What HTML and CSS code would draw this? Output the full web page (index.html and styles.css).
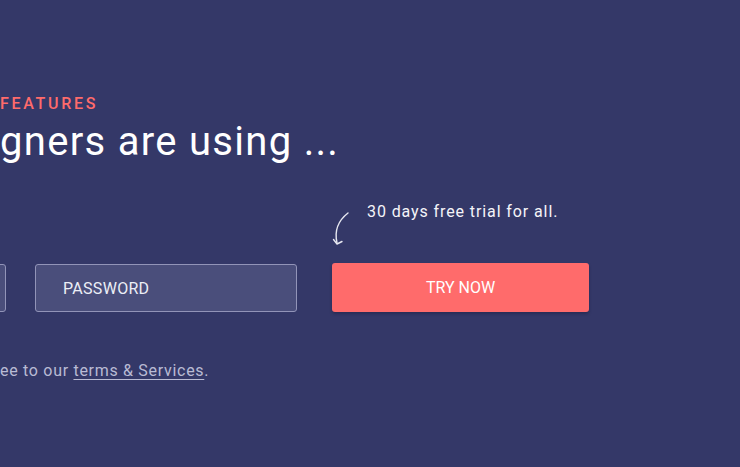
FILE: index.html
```html
<!DOCTYPE html>
<html lang="en">
<head>
<meta charset="utf-8">
<title>Features</title>
<link rel="stylesheet" href="styles.css">
</head>
<body>
<main class="hero">
  <p class="eyebrow"><span class="lead-in">KEY </span>FEATURES</p>
  <h1 class="title"><span class="lead-in">Top desi</span>gners are using ...</h1>
  <div class="note">
    <svg class="note-arrow" width="18" height="36" viewBox="0 0 18 36" aria-hidden="true">
      <path d="M16 3 C 7 10, 2 20, 5 33" fill="none" stroke="#e6e7f0" stroke-width="1.4" stroke-linecap="round"/>
      <path d="M1.5 29.5 L5 34 L10 31.5" fill="none" stroke="#e6e7f0" stroke-width="1.4" stroke-linecap="round" stroke-linejoin="round"/>
    </svg>
    <span class="note-text">30 days free trial for all.</span>
  </div>
  <form class="signup" onsubmit="return false">
    <input class="field" type="email" placeholder="EMAIL">
    <input class="field" type="password" placeholder="PASSWORD">
    <button class="cta" type="submit">TRY NOW</button>
  </form>
  <p class="legal"><span class="lead-in">By signing up you agr</span>ee to our <a href="#">terms &amp; Services</a>.</p>
</main>
</body>
</html>
```
FILE: styles.css
```css
html, body {
  margin: 0;
  padding: 0;
  background: #343868;
  overflow: hidden;
}

body {
  width: 740px;
  height: 467px;
  font-family: Roboto, "Noto Sans", sans-serif;
  color: #ffffff;
}

.hero {
  padding-top: 94px;
}

.lead-in {
  display: inline-flex;
  justify-content: flex-end;
  width: 0;
  white-space: pre;
}

.eyebrow {
  margin: 0;
  font-size: 16px;
  line-height: 20px;
  letter-spacing: 2.7px;
  color: #ff6b6b;
  font-weight: 500;
}

.title {
  margin: 5px 0 0;
  font-size: 40px;
  line-height: 46px;
  font-weight: 400;
  letter-spacing: 1.3px;
}

.note {
  display: flex;
  align-items: flex-start;
  margin: 37px 0 0 332px;
  height: 46px;
}

.note-arrow {
  margin-top: 8px;
  flex: none;
}

.note-text {
  margin-left: 17px;
  font-size: 16px;
  line-height: 20px;
  letter-spacing: 0.9px;
  color: #f4f4f8;
}

.signup {
  display: flex;
  align-items: flex-end;
  margin: 15px 0 0 -256px;
}

.field {
  box-sizing: border-box;
  width: 262px;
  height: 48px;
  margin: 0 29px 0 0;
  padding: 0 0 0 27px;
  border: 1px solid #9294b8;
  border-radius: 3px;
  background: #4a4e7b;
  font-family: inherit;
  font-size: 16px;
  letter-spacing: 0.3px;
  color: #ffffff;
  outline: none;
}

.field + .field {
  margin-right: 35px;
}

.field::placeholder {
  color: #eceef6;
  opacity: 1;
}

.cta {
  box-sizing: border-box;
  width: 257px;
  height: 49px;
  border: 0;
  border-radius: 3px;
  background: #ff6b6b;
  box-shadow: 0 2px 3px rgba(20, 20, 50, 0.35);
  font-family: inherit;
  font-size: 16px;
  color: #ffffff;
  cursor: pointer;
}

.legal {
  margin: 49px 0 0;
  font-size: 16px;
  line-height: 20px;
  letter-spacing: 0.7px;
  color: #b9bbd4;
}

.legal a {
  color: inherit;
  text-decoration: underline;
  text-underline-offset: 3px;
}
```
